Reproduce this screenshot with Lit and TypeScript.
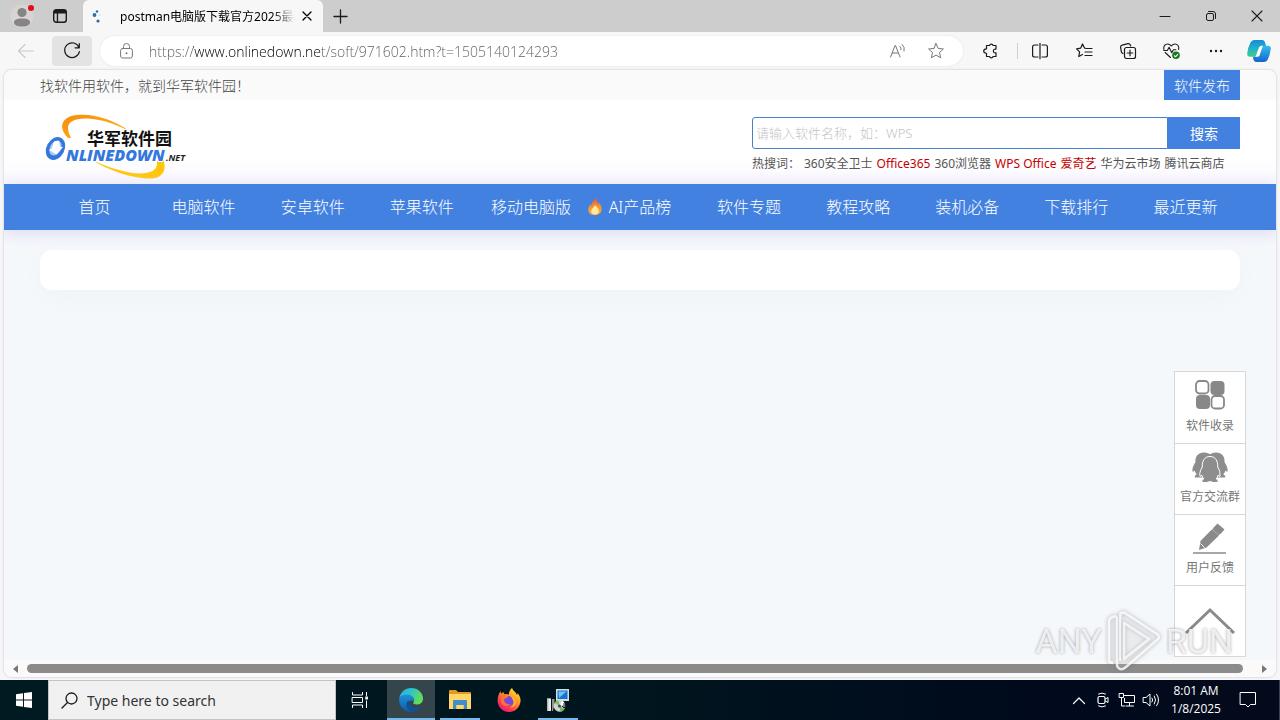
import { LitElement, html, css, svg } from "lit";
import { customElement } from "lit/decorators.js";

const icon = (w: number, h: number, body: unknown) =>
  html`<svg width=${w} height=${h} viewBox="0 0 ${w} ${h}" aria-hidden="true">${body}</svg>`;

const baseStyles = css`
  * { box-sizing: border-box; }
  svg { display: block; flex: none; overflow: visible; }
  button, input {
    font: inherit; color: inherit; border: 0; background: none;
    margin: 0; padding: 0; outline: 0; min-width: 0;
  }
  button { display: flex; align-items: center; justify-content: center; }
  a { color: inherit; text-decoration: none; }
  .line { fill: none; stroke: currentColor; stroke-linecap: round; stroke-linejoin: round; }
`;

@customElement("browser-chrome")
class BrowserChrome extends LitElement {
  static styles = [baseStyles, css`
    :host { display: block; color: #1b1b1b; }
    .tabs { display: flex; height: 32px; background: #cdcdcd; }
    .corner { width: 83px; display: flex; align-items: center; }
    .corner button { height: 32px; }
    .profile { width: 44px; }
    .workspaces { width: 32px; }
    .tab {
      width: 240px; display: flex; align-items: center; padding: 0 8px;
      background: #f7f7f7; border-radius: 6px 6px 0 0; font-size: 12px; color: #000;
    }
    .favicon { width: 29px; }
    .title {
      flex: 1; overflow: hidden; white-space: nowrap;
      mask-image: linear-gradient(90deg, #000 85%, transparent 98%);
    }
    .close { width: 16px; height: 16px; }
    .new { width: 34px; }
    .spacer { flex: 1; }
    .win { width: 46px; }
    .toolbar { display: flex; align-items: center; height: 38px; background: #f7f7f7; }
    .back { width: 52px; height: 30px; color: #c9c9c9; }
    .reload { width: 40px; height: 30px; background: #e3e3e3; border-radius: 4px; margin-right: 8px; }
    .address {
      flex: 1; display: flex; align-items: center; height: 30px; padding: 0 8px 0 10px;
      background: #fff; border-radius: 15px; box-shadow: 0 0 2px #ddd; color: #777;
    }
    .lock { width: 32px; }
    .url {
      flex: 1; height: 30px; margin-left: 7px; font-family: "Open Sans", sans-serif; font-size: 14px; font-weight: 300;
      color: transparent;
      background: linear-gradient(90deg, #5c5c5c 44px, #000 44px, #000 173px, #5c5c5c 173px);
      -webkit-background-clip: text; background-clip: text;
    }
    .address .tool { width: 38px; }
    .tool { width: 44px; height: 30px; }
    .ext { width: 54px; padding-left: 2px; }
    .rule { width: 1px; height: 16px; background: #cfcfcf; }
    .copilot { width: 42px; height: 30px; }
  `];

  render() {
    return html`
      <div class="tabs">
        <div class="corner">
          <button class="profile" aria-label="Profile">${icon(28, 26, svg`
            <circle cx="14" cy="13" r="11.5" fill="#d9d4d1"/>
            <circle cx="14" cy="9.5" r="4.6" fill="#858585"/>
            <path d="M6 19.5c0-3 3-4 8-4s8 1 8 4c0 2.500-3.500 4-8 4s-8-1.500-8-4z" fill="#858585"/>
            <circle cx="23" cy="5" r="3" fill="#e00b1c"/>`)}</button>
          <button class="workspaces" aria-label="Tab actions">${icon(14, 14, svg`
            <rect class="line" x="0.7" y="0.7" width="12.600" height="12.600" rx="2.500" stroke-width="1.4"/>
            <path d="M1 2.500Q1 1 2.500 1h9Q13 1 13 2.500V4.500H1zM3.800 4h1.300v9.500H3.800z" fill="currentColor"/>`)}</button>
        </div>
        <div class="tab">
          <span class="favicon">${icon(12, 14, svg`
            <g fill="#2d6da8"><circle cx="6" cy="2.500" r="1.200"/><circle cx="3.500" cy="6" r="1.900"/>
            <circle cx="7" cy="12" r="1.600"/><circle cx="9" cy="6" r=".6" opacity=".4"/></g>`)}</span>
          <span class="title">postman电脑版下载官方2025最新</span>
          <button class="close" aria-label="Close tab">${icon(8, 8, svg`<path class="line" d="M0 0l8 8M8 0L0 8" stroke-width="1.3"/>`)}</button>
        </div>
        <button class="new" aria-label="New tab">${icon(13, 13, svg`<path class="line" d="M6.500 0v13M0 6.500h13" stroke-width="1.3"/>`)}</button>
        <div class="spacer"></div>
        <button class="win" aria-label="Minimize">${icon(10, 10, svg`<path class="line" d="M0 5.500h10" stroke-width="1"/>`)}</button>
        <button class="win" aria-label="Restore">${icon(10, 10, svg`
          <rect class="line" x="0.5" y="2.500" width="7" height="7" rx="1.500"/><path class="line" d="M2.500.5H7Q9.500.5 9.500 3v4.500"/>`)}</button>
        <button class="win" aria-label="Close">${icon(10, 10, svg`<path class="line" d="M0 0l10 10M10 0L0 10" stroke-width="1.1"/>`)}</button>
      </div>
      <div class="toolbar">
        <button class="back" aria-label="Back">${icon(16, 14, svg`<path class="line" d="M7 .5L.5 7 7 13.500M.5 7h15" stroke-width="1.1"/>`)}</button>
        <button class="reload" aria-label="Refresh">${icon(16, 16, svg`
          <path class="line" d="M15 4.500A7.400 7.400 0 1 0 15.400 8.500M15.300.6v4.200h-4.200" stroke-width="1.2"/>`)}</button>
        <div class="address">
          <button class="lock" aria-label="Site information">${icon(13, 16, svg`
            <rect class="line" x="0.6" y="5.500" width="11.800" height="9.500" rx="2"/>
            <path class="line" d="M3.500 5.500V3.500a3 3 0 0 1 6 0v2"/><circle cx="6.500" cy="10.300" r="1" fill="currentColor"/>`)}</button>
          <input class="url" aria-label="Address" value="https://www.onlinedown.net/soft/971602.htm?t=1505140124293" />
          <button class="tool" aria-label="Read aloud">${icon(16, 14, svg`
            <path class="line" d="M.6 13L5 1.500h.5L10 13M2.200 9h6.200M10 2.500q1.500 1.300 1 3.200M12.200.6q3 2.600 1.900 6.400"/>`)}</button>
          <button class="tool" aria-label="Favorite">${icon(16, 16, svg`
            <path class="line" d="M8 .6l2.200 4.800 5.200.6-3.900 3.500 1.100 5.200L8 12.100l-4.600 2.600 1.100-5.200L.6 6l5.200-.6z"/>`)}</button>
        </div>
        <button class="tool ext" aria-label="Extensions">${icon(16, 16, svg`
          <path class="line" d="M4 2.500h2.500a1.900 1.900 0 0 1 3.600 0H13v3.600q-2.600-.4-2.600 1.900t2.600 1.900v3.600h-2.900a1.900 1.900 0 0 1-3.600 0H3.500v-3.200Q.7 10 .7 8t2.800-2.200V2.500z" stroke-width="1.2"/>`)}</button>
        <span class="rule"></span>
        <button class="tool" aria-label="Split screen">${icon(16, 16, svg`
          <path class="line" d="M6 2H2.500Q.6 2 .6 4v8q0 2 1.900 2H6M10 2h3.500q1.900 0 1.900 2v8q0 2-1.900 2H10M8 .3v15.400" stroke-width="1.2"/>`)}</button>
        <button class="tool" aria-label="Favorites">${icon(17, 16, svg`
          <path class="line" d="M10 5.500L8.500 5 6.500 1 4.600 5.200.6 5.800l3 3-.8 4.700 3.700-2M10 5.500h6M9 9h7M9 12.500h7" stroke-width="1.2"/>`)}</button>
        <button class="tool" aria-label="Collections">${icon(16, 16, svg`
          <path class="line" d="M3 10.500Q1.500 10 1.300 8.600L.6 4.200q-.2-1.800 1.500-2.100L8 .7q1.700-.3 2.300 1.300l.4 1" stroke-width="1.2"/>
          <rect class="line" x="4.500" y="4.500" width="11" height="11" rx="2" stroke-width="1.2"/><path class="line" d="M10 7.200v5.600M7.200 10h5.600" stroke-width="1.2"/>`)}</button>
        <button class="tool" aria-label="Browser essentials">${icon(18, 17, svg`
          <path class="line" d="M.8 6.500C.3 3 2.200 1 4.600 1 6.300 1 7.500 2 8.300 3 9.100 2 10.300 1 12 1c2.500 0 4.300 2.200 3.700 5.500M2.200 9.500L7.500 14.500M.8 7.500h3.500l1.800-3.200 2.700 5.500 1.600-3h2.500" stroke-width="1.1"/>
          <circle cx="13" cy="12.300" r="3.800" fill="#187a1d"/><path d="M11.200 12.500l1.400 1.300 2.400-2.700" fill="none" stroke="#fff" stroke-width="1.1"/>`)}</button>
        <button class="tool" aria-label="More">${icon(14, 4, svg`
          <g fill="currentColor"><circle cx="2" cy="2" r="1.200"/><circle cx="7" cy="2" r="1.200"/><circle cx="12" cy="2" r="1.200"/></g>`)}</button>
        <button class="copilot" aria-label="Copilot">${icon(24, 22, svg`
          <defs>
            <linearGradient id="cl" x1="0" y1="0" x2="0" y2="1"><stop offset="0" stop-color="#168bd8"/><stop offset=".55" stop-color="#25b4c8"/><stop offset="1" stop-color="#3ccf83"/></linearGradient>
            <linearGradient id="cr" x1="0" y1="0" x2="0" y2="1"><stop offset="0" stop-color="#35bdf2"/><stop offset="1" stop-color="#1763cf"/></linearGradient>
          </defs>
          <path d="M7 0h8q2.500 0 3.200 3l.8 3h-4q-2 0-2.700 2.500L10.500 15q-.6 1.800-2.500 1.800H3Q0 16.800.2 13.500 1 7 3.500 2.500 4.800 0 7 0z" fill="url(#cl)"/>
          <path d="M17 22H9.500Q7 22 6.300 19l-.5-2.300H8.500q2 0 2.700-2.200L13.200 8q.7-2.200 2.800-2.200h5Q24 5.800 23.800 9 23 15.500 20.500 20 19.200 22 17 22z" fill="url(#cr)"/>
          <path d="M12 7.500q.7-1.700 2.400-1.700h1.500L12.500 15.500q-.6 1.300-2.400 1.300H8.500z" fill="#fff"/>`)}</button>
      </div>`;
  }
}

@customElement("site-page")
class SitePage extends LitElement {
  static styles = [baseStyles, css`
    :host {
      display: flex; flex-direction: column; position: relative; background: #f5f8fb;
      border-radius: 8px; overflow: hidden; box-shadow: 0 0 0 1px #e4e4e6, 0 0 3px #d4d4d8; color: #444;
      font-weight: 300;
    }
    .top {
      display: flex; justify-content: space-between; align-items: stretch; height: 30px;
      padding: 0 36px; background: #fafafa; font-size: 14px; line-height: 32px;
    }
    .publish { background: #4381e1; color: #fff; padding: 0 10px; }
    .head {
      display: flex; justify-content: space-between; align-items: flex-start; height: 84px;
      padding: 12px 36px 0; background: linear-gradient(#fff 70%, #f8f6fc);
    }
    .find { width: 488px; padding-top: 5px; }
    .box { display: flex; height: 32px; }
    .box input {
      flex: 1; border: 1px solid #4381c8; border-radius: 3px 0 0 3px; background: #fff;
      padding: 0 3px; font-size: 13px; color: #333;
    }
    .box input::placeholder { color: #c4c4c4; opacity: 1; }
    .box button { width: 72px; background: #4381e1; color: #fff; font-size: 14px; font-weight: 400; }
    .hot { display: flex; gap: 4px; font-size: 12px; line-height: 30px; white-space: nowrap; font-weight: 400; color: #555; }
    .label { width: 48px; }
    .red { color: #c40000; }
    nav {
      display: grid; grid-template-columns: repeat(11, 1fr); padding: 0 36px; background: #4381e1;
      color: #fff; font-size: 16px; line-height: 46px; text-align: center; white-space: nowrap;
      box-shadow: 0 3px 16px #dcd8f6;
    }
    nav a { position: relative; }
    nav svg { position: absolute; left: 3px; top: 14px; }
    .card { height: 40px; margin: 20px 36px; background: #fff; border-radius: 12px; box-shadow: 0 8px 24px #eff3f8; }
    .side {
      position: absolute; right: 30px; bottom: 20px; width: 72px;
      background: #fff; border: 1px solid #d7d7d7; color: #777; font-size: 12px; font-weight: 400;
    }
    .side a {
      display: flex; flex-direction: column; align-items: center; justify-content: space-between;
      height: 71px; padding: 8px 0; line-height: 18px; white-space: nowrap;
    }
    .side a + a { border-top: 1px solid #d7d7d7; }
    .side .up { justify-content: center; padding: 0; }
    .scroll {
      display: flex; align-items: center; gap: 8px; height: 17px; margin-top: auto; padding: 0 8px;
      background: #fafafa; color: #777;
    }
    .thumb { flex: 1; height: 9px; border-radius: 5px; background: #8b8b8b; }
  `];

  private items = ["首页", "电脑软件", "安卓软件", "苹果软件", "移动电脑版", "AI产品榜", "软件专题", "教程攻略", "装机必备", "下载排行", "最近更新"];
  private hot: [string, boolean][] = [["360安全卫士", false], ["Office365", true], ["360浏览器", false], ["WPS Office", true], ["爱奇艺", true], ["华为云市场", false], ["腾讯云商店", false]];

  private flame() {
    return icon(14, 17, svg`
      <defs><linearGradient id="fl" x1="0" y1="0" x2="0" y2="1"><stop offset="0" stop-color="#e0573c"/><stop offset=".5" stop-color="#f7902f"/><stop offset="1" stop-color="#fbb040"/></linearGradient></defs>
      <path d="M6.500 0C10 3 9.500 5 10 6q.8-.6.8-2C13 7 14 9.500 13.500 12 13 15.500 10.500 17 7 17S.8 15.500.3 12.200C0 9.500 1.500 7.500 2.300 6.200q0 1.500.9 2.200C3 5 6 4 6.500 0z" fill="url(#fl)"/>
      <path d="M7 7c2.500 2.500 4 4 3.800 6.200C10.600 15.500 9 16.500 7 16.500s-3.600-1.200-3.800-3.300C3 11 5.500 10 7 7z" fill="#ffe9a0"/>`);
  }

  private logo() {
    return html`<a href="#" aria-label="华军软件园">${icon(152, 72, svg`
      <defs><linearGradient id="sw" x1="0" y1="0" x2="1" y2="1"><stop offset="0" stop-color="#f78c0c"/><stop offset="1" stop-color="#ffb81c"/></linearGradient></defs>
      <path d="M28 26Q22 20 22 14C23 6 31 3 40 2.800 56 2 76 9 89 19 76 12 60 7 48 6.500 34 6 28 10 28 16Q28 21 31 26z" fill="url(#sw)"/>
      <path d="M52 47.500C66 55 84 60.500 98 61.500 110 62 117 58 117 52V48h6.500c3 9 0 16-8 18C98 69 66 58 52 47.500z" fill="#ffc60a"/>
      <ellipse cx="15.500" cy="36.500" rx="9" ry="12" transform="rotate(28 15.500 36.500)" fill="#3478dd"/>
      <ellipse cx="15.500" cy="36" rx="5.500" ry="8" transform="rotate(28 15.500 36)" fill="#a9cbf5"/>
      <path d="M14 29.500l5-.8 1 6 3 .3-6.500 7.500L9 38l2.800-1.500z" fill="#fff"/>
      <text x="47" y="33" font-family="Noto Sans CJK SC, sans-serif" font-weight="700" font-size="17" fill="#111" stroke="#fff" stroke-width="2" paint-order="stroke">华军软件园</text>
      <text x="26" y="49" font-family="Open Sans, sans-serif" font-style="italic" font-weight="800" font-size="16" fill="#3478dd" stroke="#fff" stroke-width="2" paint-order="stroke">NLINEDOWN</text>
      <text x="126" y="49" font-family="Open Sans, sans-serif" font-weight="700" font-style="italic" font-size="9" fill="#222">.NET</text>`)}</a>`;
  }

  render() {
    return html`
      <div class="top"><span>找软件用软件，就到华军软件园！</span><a class="publish" href="#">软件发布</a></div>
      <header class="head">
        ${this.logo()}
        <div class="find">
          <div class="box">
            <input aria-label="搜索" placeholder="请输入软件名称，如：WPS" />
            <button>搜索</button>
          </div>
          <div class="hot"><span class="label">热搜词：</span>${this.hot.map(([t, red]) => html`<a href="#" class=${red ? "red" : ""}>${t}</a>`)}</div>
        </div>
      </header>
      <nav>${this.items.map((t, i) => html`<a href="#">${i === 5 ? this.flame() : ""}${t}</a>`)}</nav>
      <div class="card"></div>
      <aside class="side">
        <a href="#">${icon(30, 30, svg`
          <g fill="#888"><rect x="15.500" y="1" width="14" height="14" rx="4"/><rect x="1" y="15" width="14" height="14" rx="4"/></g>
          <g fill="#fff" stroke="#888" stroke-width="1.800"><rect x="1" y="1" width="12.500" height="12.500" rx="3.500"/><rect x="16.500" y="16" width="12.500" height="12.500" rx="3.500"/></g>`)}<span>软件收录</span></a>
        <a href="#">${icon(36, 31, svg`
          <g fill="#8d8d8d"><path d="M12 .5C5 .5 3 6 3.500 10 1 14 0 17 .5 19.500q1 .5 2-1 .8 2.500 2.300 3.800Q2 23.500 3 25.500h8L20 4Q17 .5 12 .5z"/>
          <path d="M24 .5c7 0 9 5.500 8.500 9.500 2.500 4 3.500 7 3 9.500q-1 .5-2-1-.8 2.500-2.300 3.800Q34 23.500 33 25.500h-8L16 4q3-3.500 8-3.500z"/>
          <path d="M18 4.500c-5.500 0-8 4.500-7.700 10.500-2.300 3.500-3 7-2.300 9.500q1-.3 1.800-1.500.5 2.300 2 3.800-2.800 1.200-1.800 3.500 4 1 8-.7 4 1.700 8 .7 1-2.300-1.800-3.500 1.500-1.500 2-3.800.8 1.200 1.800 1.500.7-6-2.300-9.500C26 9 23.500 4.500 18 4.500z" stroke="#fff" stroke-width="1"/></g>`)}<span>官方交流群</span></a>
        <a href="#">${icon(34, 32, svg`
          <path d="M24.500.5l7 6-4.300 4.700-7-6.300zM19 6.200l7 6.300L13.500 24.500 6 27l1.500-9z" fill="#8a8a8a"/>
          <path d="M7.500 20.500l4 4" stroke="#fff"/><path d="M20 5.500l6.500 6" stroke="#8a8a8a" stroke-width="2"/><path d="M0 30h33" stroke="#8a8a8a" stroke-width="1.600"/>`)}<span>用户反馈</span></a>
        <a href="#" class="up" aria-label="返回顶部">${icon(50, 26, svg`<path d="M1 25L25 2l24 23" fill="none" stroke="#8a8a8a" stroke-width="3"/>`)}</a>
      </aside>
      <div class="scroll">
        ${icon(7, 8, svg`<path d="M6 0v8L1 4z" fill="currentColor"/>`)}
        <div class="thumb"></div>
        <div>${icon(17, 8, svg`<path d="M11 0v8l5-4z" fill="currentColor"/>`)}</div>
      </div>`;
  }
}

@customElement("task-bar")
class TaskBar extends LitElement {
  static styles = [baseStyles, css`
    :host {
      display: flex; height: 40px; color: #fff; font-size: 12px;
      background: linear-gradient(90deg, #001a21, #00151e 50%, #000a1c 80%, #030a1c);
    }
    .start { width: 48px; }
    .search {
      display: flex; align-items: center; width: 288px; padding-left: 12px; gap: 9px;
      background: #f1f1f1; border: 1px solid #c4c4c4; color: #1b1b1b; font-size: 14px;
    }
    .search input { flex: 1; height: 36px; }
    .search input::placeholder { color: #333; opacity: 1; }
    .app { width: 48px; margin-right: 1px; }
    .view { margin-right: 3px; }
    .edge { background: #34464c; border-bottom: 2px solid #76b9ed; padding-top: 2px; }
    .run { background: linear-gradient(#76b9ed, #76b9ed) center bottom / 40px 2px no-repeat; }
    .tray { display: flex; margin-left: auto; align-items: center; }
    .tray button { width: 24px; height: 40px; }
    .clock { width: 66px; text-align: center; line-height: 18px; font-family: "Open Sans", sans-serif; font-size: 12px; }
    .tray .note { width: 38px; }
    .peek { width: 13px; height: 40px; border-right: 1px solid #39415a; }
  `];

  render() {
    return html`
      <button class="start" aria-label="Start">${icon(16, 16, svg`<path d="M0 2.200L7 1.200V7.500H0zM8 1l8-1v7.500H8zM0 8.500h7v6.300l-7-1zM8 8.500h8V16l-8-1z" fill="#fff"/>`)}</button>
      <label class="search">
        ${icon(17, 17, svg`<circle class="line" cx="10.500" cy="6.500" r="5.500" stroke-width="1.3"/><path class="line" d="M6.500 10.500L1 16" stroke-width="1.4"/>`)}
        <input aria-label="Search" placeholder="Type here to search" />
      </label>
      <button class="app view" aria-label="Task view">${icon(16, 16, svg`
        <path class="line" d="M.5.5v2.500h10V.5M.5 15.500V13h10v2.500M.5 5.500h10v5H.5zM14.500.5v3M14.500 9v6.500" stroke-linecap="butt"/><rect x="13.300" y="4.500" width="2.600" height="3" fill="#fff"/>`)}</button>
      <button class="app edge" aria-label="Microsoft Edge">${icon(24, 24, svg`
        <defs>
          <linearGradient id="eg" x1="0" y1="0" x2="1" y2=".4"><stop offset="0" stop-color="#28a8e0"/><stop offset=".5" stop-color="#2fc5cc"/><stop offset="1" stop-color="#62dd55"/></linearGradient>
          <linearGradient id="eb" x1="0" y1="0" x2="0" y2="1"><stop offset="0" stop-color="#2092dc"/><stop offset="1" stop-color="#0c59a4"/></linearGradient>
        </defs>
        <path d="M.3 10C1.500 4 6 0 12 0c7 0 12 5 12 10.500 0 4-3 6-6.300 6-2.700 0-3.900-1-3.300-2 1.500-2 .6-6.500-4.400-7C5 7 2 8 .3 10z" fill="url(#eg)"/>
        <path d="M.2 10.500C2 7.500 5.500 6 9 6.500c4.500.6 6.500 4 5.800 7-1.800-2-5.800-1-5.800 2.500 0 4 5 6.300 10.300 4.800C17 23 15 24 12 24 5 24-.6 18 .2 10.500z" fill="url(#eb)"/>
        <path d="M9.600 12.300C7 14 6.500 18 9 21c2 2.200 5 3 7 2.300 2.200-.8 4-2.200 5.300-4-.3-.5-1-.2-1.800 0-5 1.500-9.500-.8-9.900-7z" fill="#134f92"/>`)}</button>
      <button class="app run" aria-label="File Explorer">${icon(22, 20, svg`
        <path d="M0 1q0-1 1-1h6l2 2h12q1 0 1 1v4H0z" fill="#e09a20"/><path d="M0 4h22v15H0z" fill="#ffd768"/>
        <path d="M4 11q0-1 1-1h12q1 0 1 1v8h-3.500v-4h-7v4H4z" fill="#3f8ecb"/><path d="M7.500 15h7v4h-7z" fill="#ffd768"/>`)}</button>
      <button class="app" aria-label="Firefox">${icon(24, 24, svg`
        <defs><linearGradient id="ff" x1=".9" y1="0" x2=".2" y2="1"><stop offset="0" stop-color="#fff044"/><stop offset=".4" stop-color="#ff9a24"/><stop offset=".75" stop-color="#ff3850"/><stop offset="1" stop-color="#e31587"/></linearGradient></defs>
        <path d="M15 0c1 3 4 4 5 7q.7-.6.500-2C23 8 24 11 23.400 14 22.400 20 18 24 12 24S1 19.500.6 13C.4 9 2 5.500 3.500 3q.1 1.700.9 2.500L6.500 4q.2 1.500 1 2.200 2.500-.5 4.200.5C12 4 13 1.500 15 0z" fill="url(#ff)"/>
        <circle cx="12" cy="13" r="5" fill="#7a48d8"/><path d="M4.500 8q3-2.500 7 .5-2 2.200-5 2.200 1 6 7 5.500-4 3.500-8 .5-3-3-1-8.700z" fill="#ff7139"/><path d="M13 8q6 0 6 6 0 5-6 6 4-3 3.500-6.500Q16 10 13 8z" fill="#ffb02e"/>`)}</button>
      <button class="app run" aria-label="Installer">${icon(22, 23, svg`
        <path d="M9 0h13v12H9z" fill="#d8dcd8"/><path d="M10.500 1.500h10v8.500h-10z" fill="#1573d2"/><path d="M11.500 2.500h8L12 9z" fill="#69c3f5"/>
        <path d="M0 9l4 1v12H0z" fill="#b9b9b3"/><path d="M1.500 9.500H4V22H1.500z" fill="#efece3"/><path d="M5 10h2.500v5L6 22H5z" fill="#8f938f"/>
        <circle cx="12.500" cy="17" r="5.800" fill="#cdd5d2"/><path d="M12.500 17l-5-3a6 6 0 0 1 4-3z" fill="#7dbd62"/><path d="M12.500 17l5 3a6 6 0 0 1-4 3z" fill="#79b06a"/><path d="M12.500 17l5.500-2a6 6 0 0 0-3-3.500z" fill="#fff"/><circle cx="12.500" cy="17" r="1.500" fill="#34454a"/>
        <path d="M17 14v5M15 17l2 2 2-2" stroke="#222" fill="none"/>`)}</button>
      <div class="tray">
        <button aria-label="Hidden icons">${icon(12, 7, svg`<path class="line" d="M.5 6.500L6 1l5.500 5.500" stroke-width="1.2"/>`)}</button>
        <button aria-label="Meet now">${icon(12, 16, svg`
          <rect class="line" x="1" y="4.500" width="7" height="7" rx="1.500" stroke-width="1.2"/><path class="line" d="M8.500 7l2.500-1.500v5L8.500 9M1.500 2Q5 0 8.500 2M1.500 14Q5 16 8.500 14"/>`)}</button>
        <button aria-label="Network">${icon(16, 14, svg`
          <path class="line" d="M5.500 2.500h10v7h-10v-4M10.500 9.500v3M7 13h7.500M.5.5h4v4h-4zM2.500 4.500v8.500h3"/>`)}</button>
        <button aria-label="Volume">${icon(17, 14, svg`
          <path class="line" d="M.5 4.500h2.500L7 1v12L3 9.500H.5zM9 5q1.500 2 0 4M11.300 3q2.700 4 0 8M13.600 1.200q4 5.800 0 11.600"/>`)}</button>
        <div class="clock">8:01 AM<br />1/8/2025</div>
        <button class="note" aria-label="Notifications">${icon(16, 16, svg`<path class="line" d="M.5.500h15v12h-5L8 15l-2.500-2.500h-5z"/>`)}</button>
        <span class="peek"></span>
      </div>`;
  }
}

@customElement("app-root")
class AppRoot extends LitElement {
  static styles = [baseStyles, css`
    :host {
      display: flex; flex-direction: column; height: 100vh; position: relative; overflow: hidden;
      background: #f7f7f9; font-family: "Noto Sans", "Noto Sans CJK SC", sans-serif;
    }
    site-page { flex: 1; min-height: 0; margin: 0 4px 3px; }
    .mark {
      position: absolute; right: 47px; bottom: 48px; display: flex; align-items: center; gap: 4px;
      color: rgba(255, 255, 255, 0.8); text-shadow: 0 0 3px rgba(90, 90, 100, 0.6); pointer-events: none;
      font-family: "Roboto", sans-serif; font-size: 34px; line-height: 62px; font-weight: 400;
    }
    .mark svg { filter: drop-shadow(0 0 2px rgba(90, 90, 100, 0.6)); }
  `];

  render() {
    return html`
      <browser-chrome></browser-chrome>
      <site-page></site-page>
      <task-bar></task-bar>
      <div class="mark"><span>ANY</span>
        ${icon(56, 62, svg`
          <path d="M14 51V6q0-5 5-3l32 21q4 3 0 6L20 57q-6 5-9-1V9q0-4-4-2-4 1-4 5v38q0 3 4 3" fill="rgba(255,255,255,.18)" stroke="rgba(255,255,255,.8)" stroke-width="2.500"/>
          <path d="M18 13v36l25-20z" fill="none" stroke="rgba(255,255,255,.75)" stroke-width="2.500" stroke-linejoin="round"/>`)}
        <span>RUN</span></div>`;
  }
}
